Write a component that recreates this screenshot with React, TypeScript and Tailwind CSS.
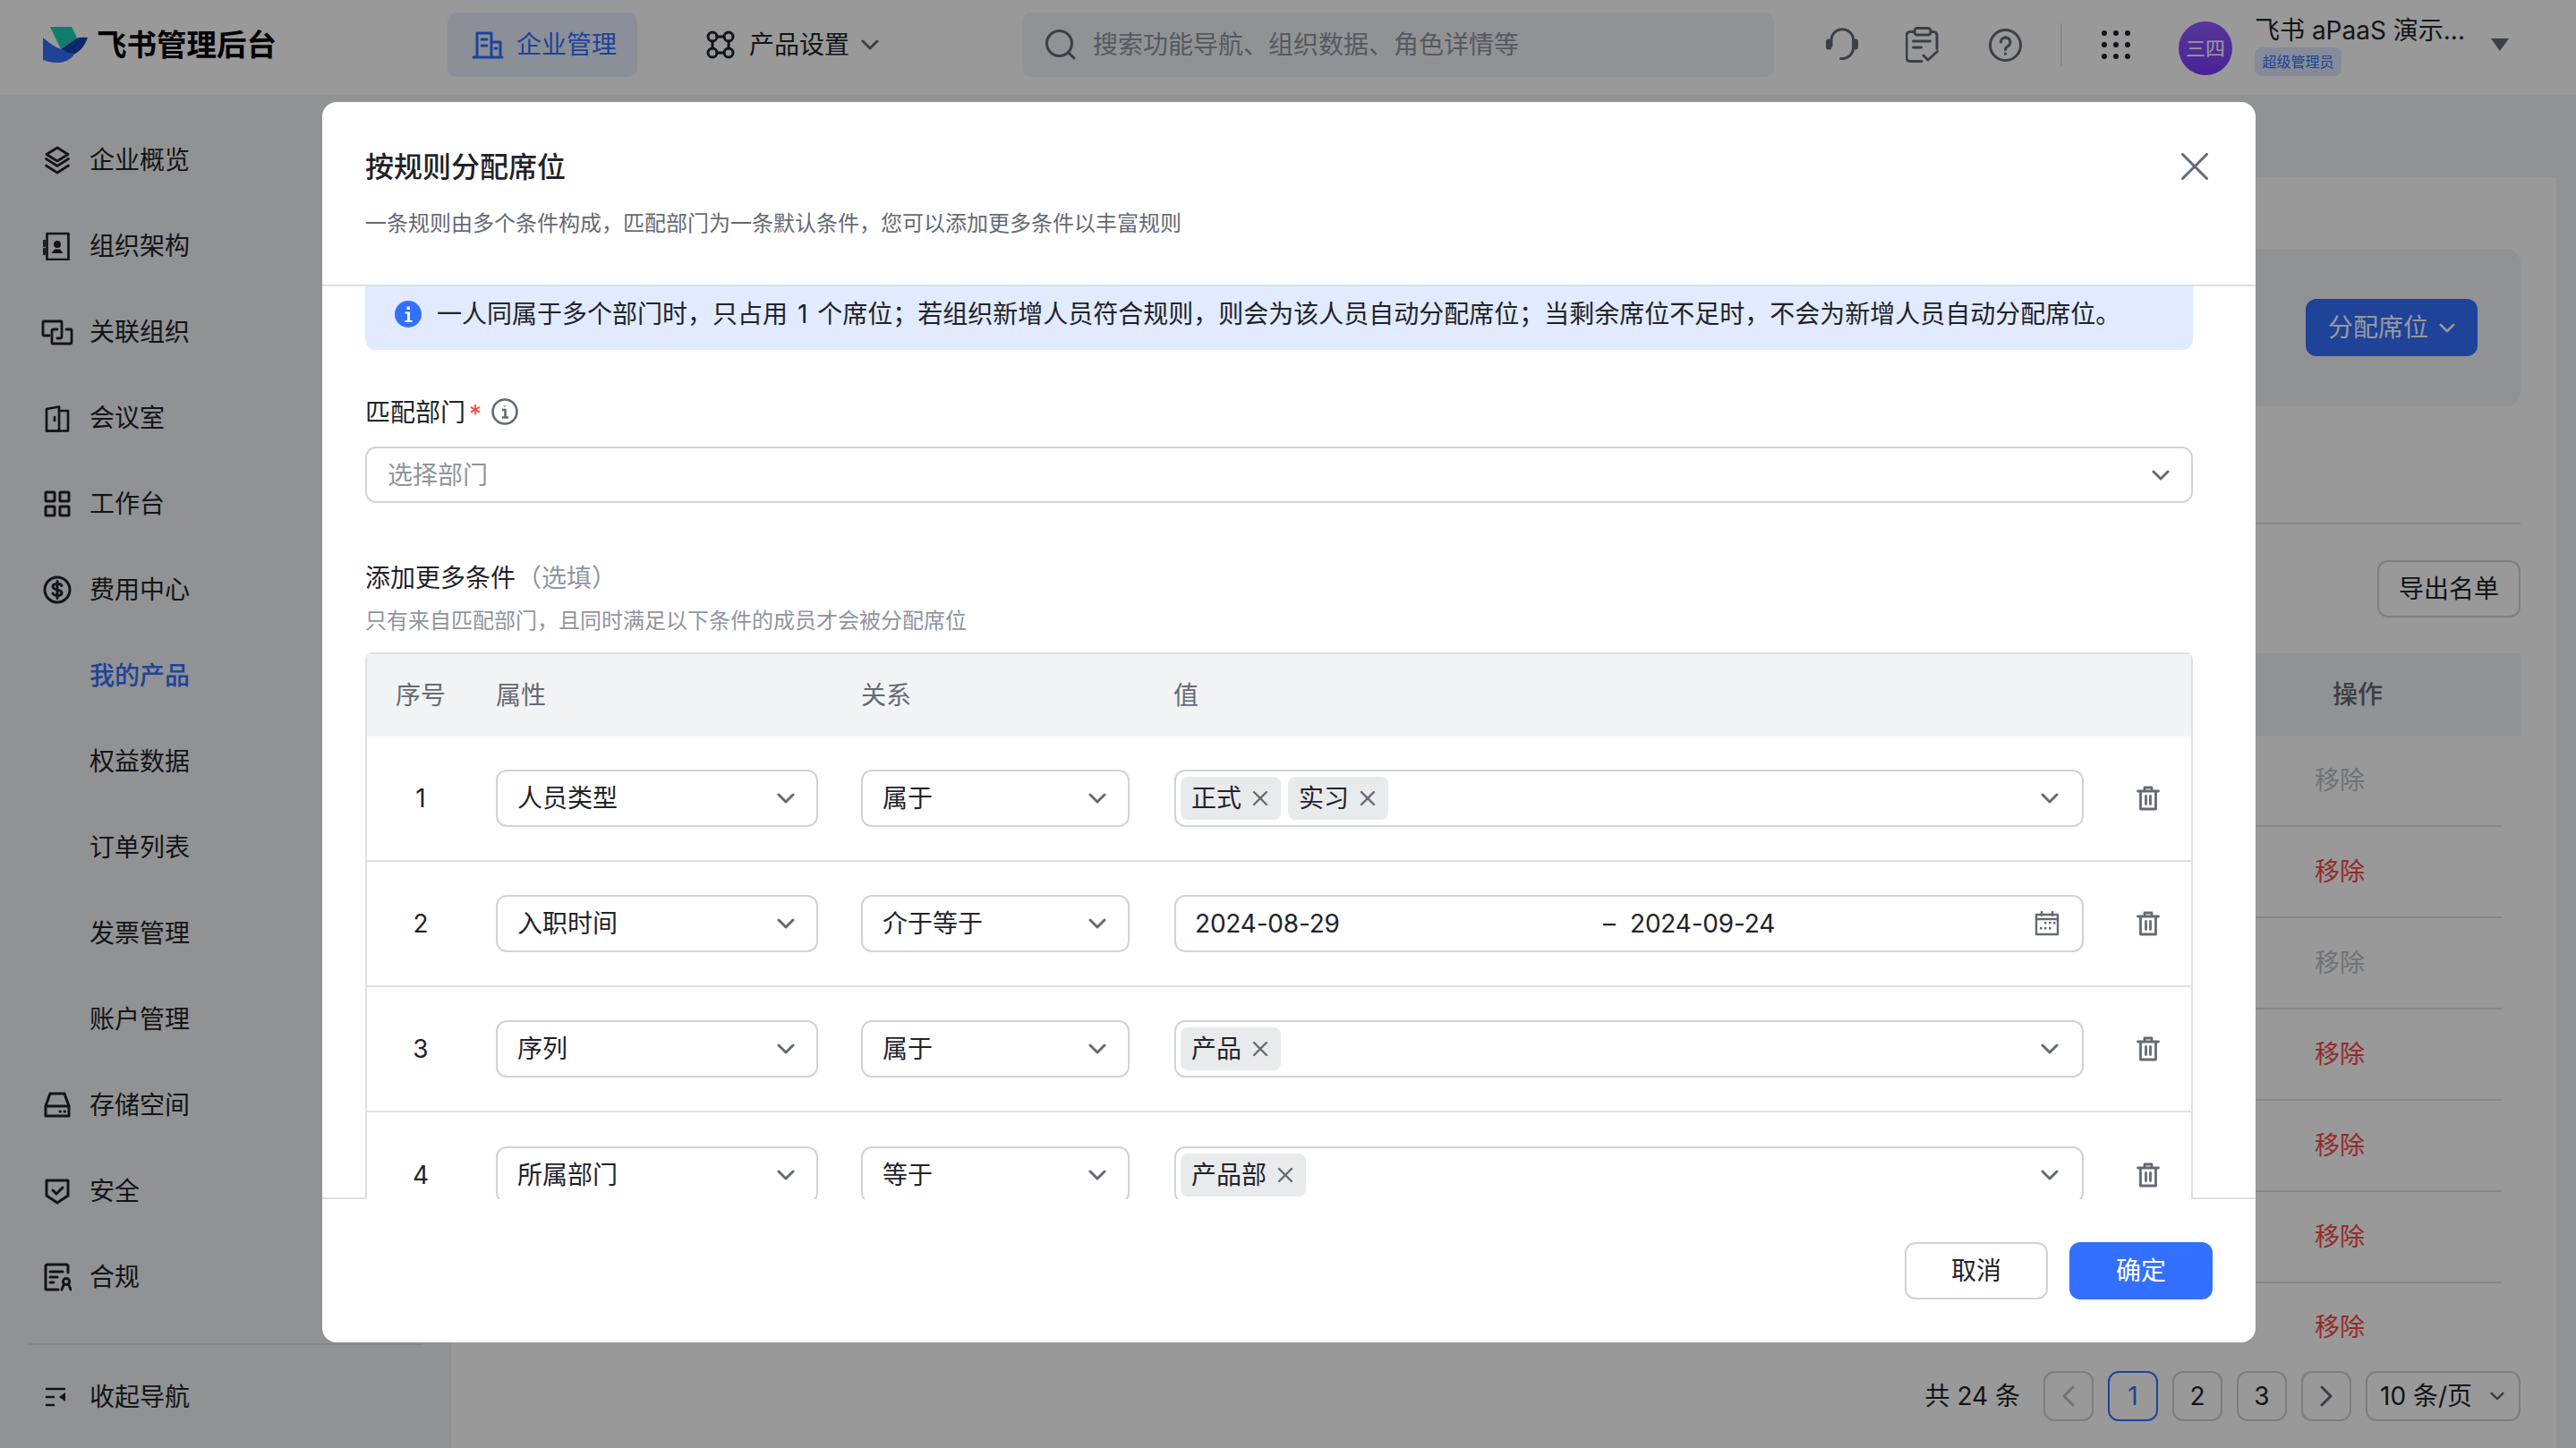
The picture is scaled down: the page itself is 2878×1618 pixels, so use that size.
import React from "react";

type IconProps = { className?: string };

const S = ({ w = 32, h = 32, vb = "0 0 32 32", sw = 3, children, className = "" }: { w?: number; h?: number; vb?: string; sw?: number; children: React.ReactNode; className?: string }) => (
  <svg width={w} height={h} viewBox={vb} fill="none" stroke="currentColor" strokeWidth={sw} strokeLinejoin="round" strokeLinecap="round" className={`shrink-0 ${className}`}>
    {children}
  </svg>
);

const LayersIcon = () => (
  <S sw={2.700}><path d="M16 2 28 9.500 16 17 4 9.500Z" /><path d="M3.500 14.500 16 22.500l12.500-8" /><path d="M3.500 22 16 30l12.500-8" /></S>
);
const ContactIcon = () => (
  <S sw={2.700}><path d="M4.500 2h24v29h-24Z" /><circle cx="16" cy="14" r="4" fill="currentColor" stroke="none" /><path d="M13 19.500h6l3.500 4.500h-13Z" fill="currentColor" stroke="none" /><path d="M1.500 10v6M1.500 19v6" /></S>
);
const LinkOrgIcon = () => (
  <S w={36} vb="-2 0 36 32" sw={2.800}><path d="M7 20H1a1 1 0 0 1-1-1V5a1 1 0 0 1 1-1h19a1 1 0 0 1 1 1v16a2 2 0 0 1-2 2h-3" /><path d="M16 13h-4a2 2 0 0 0-2 2v13a1 1 0 0 0 1 1h20a1 1 0 0 0 1-1V14a1 1 0 0 0-1-1h-5" /></S>
);
const DoorIcon = () => (
  <S sw={2.700}><path d="M4 30.500V6l14-2.500v27Z" /><path d="M18 8h10v22.500H4" /><path d="M13 15v4" /></S>
);
const GridIcon = () => (
  <S><rect x="3" y="3" width="10" height="10" rx="1" /><rect x="19" y="3" width="10" height="10" rx="1" /><rect x="3" y="19" width="10" height="10" rx="1" /><rect x="19" y="19" width="10" height="10" rx="1" /></S>
);
const DollarIcon = () => (
  <S><circle cx="16" cy="16" r="14" /><path d="M21 11.500C19.500 8.500 11 8.500 11 12.500c0 4.500 10 2.500 10 7 0 4-8.500 4-10 .5" /><path d="M16 6.500v19" /></S>
);
const DriveIcon = () => (
  <S><path d="M8 3h16l5 14v11H3V17Z" /><path d="M3 17h26" /><path d="M19 23h.5M24 23h.5" /></S>
);
const ShieldIcon = () => (
  <S><path d="M4 4h24v17l-12 8-12-8Z" /><path d="m11 15 4 4 7-7" /></S>
);
const ComplianceIcon = () => (
  <S><path d="M28 11V4a2 2 0 0 0-2-2H5a2 2 0 0 0-2 2v25a1 1 0 0 0 1 1h13" /><path d="M8 10h14M8 16h8M8 22h4" /><circle cx="26" cy="21" r="3.500" /><path d="m23 25-2 5M29 25l2 5" /></S>
);
const CollapseIcon = () => (
  <S sw={2.600}><path d="M4 7h20M4 16h8M4 25h8" /><path d="M25 11v10l-7-5Z" fill="currentColor" stroke="none" /></S>
);
const BuildingIcon = () => (
  <S w={36} h={32} vb="0 0 36 32"><path d="M6 29V3h16v26" /><path d="M22 13h10v16" /><path d="M2 30h32" /><path d="M11 10h6M11 17h6M26 20h2" /></S>
);
const ProductIcon = () => (
  <S w={34} h={34} vb="0 0 34 34"><circle cx="8" cy="8" r="5" /><circle cx="26" cy="8" r="5" /><circle cx="8" cy="26" r="5" /><circle cx="26" cy="26" r="5" /><path d="M13 8h8M13 26h8M8 13v8M26 13v8" /></S>
);
const SearchIcon = () => (
  <S w={36} h={36} vb="0 0 36 36"><circle cx="16.500" cy="16.500" r="14" /><path d="m27 27 6 6" /></S>
);
const HeadsetIcon = () => (
  <S w={36} h={38} vb="0 0 36 38"><path d="M6 20v-6a12.300 12.300 0 0 1 24.600 0v6" /><rect x="0" y="12.500" width="6.500" height="12" rx="3" fill="currentColor" stroke="none" /><rect x="29.500" y="12.500" width="6.500" height="12" rx="3" fill="currentColor" stroke="none" /><path d="M30.600 22c0 6-4 11-11 12.500h-3" /></S>
);
const DocCheckIcon = () => (
  <S w={38} h={40} vb="0 0 38 40"><path d="M10 5.500H5a4 4 0 0 0-4 4v25a4 4 0 0 0 4 4h13" /><path d="M28 5.500h3a4 4 0 0 1 4 4v15" /><rect x="10" y="1.500" width="18" height="7.500" rx="3" /><path d="M8.500 16h19M8.500 23h9" /><path d="m20 32 5 5 10.500-9.500" /></S>
);
const HelpIcon = () => (
  <S w={37} h={37} vb="0 0 37 37"><circle cx="18.500" cy="18.500" r="17" /><path d="M13.500 15a5.200 5.200 0 1 1 8 4.500c-1.800 1.200-3 2-3 4" /><path d="M18.500 28v.2" /></S>
);
const Chevron = ({ w = 20, className = "" }: IconProps & { w?: number }) => (
  <svg width={w} height={Math.round(w * 0.6)} viewBox="0 0 20 12" fill="none" stroke="currentColor" strokeWidth={3} strokeLinecap="round" strokeLinejoin="round" className={`shrink-0 ${className}`}>
    <path d="M2 2l8 8 8-8" />
  </svg>
);
const TagX = () => (
  <svg width="18" height="18" viewBox="0 0 18 18" fill="none" stroke="currentColor" strokeWidth={2.400} strokeLinecap="round" className="shrink-0 text-[#646a73]">
    <path d="M2 2l14 14M16 2 2 16" />
  </svg>
);
const TrashIcon = () => (
  <svg width="26" height="28" viewBox="0 0 26 28" fill="none" stroke="currentColor" strokeWidth={2.800} strokeLinejoin="round" strokeLinecap="round" className="shrink-0 text-[#646a73]">
    <path d="M1.500 6h23M9 6V2h8v4M4.500 6v20h17V6M10.500 11.500v9M15.500 11.500v9" />
  </svg>
);
const CalendarIcon = () => (
  <svg width="28" height="28" viewBox="0 0 28 28" fill="none" stroke="currentColor" strokeWidth={2.400} strokeLinejoin="round" strokeLinecap="round" className="shrink-0 text-[#646a73]">
    <path d="M2 4h24v22H2ZM8 1v4M20 1v4" />
    <path d="M2 9h24" />
    <g fill="currentColor" stroke="none"><rect x="11" y="12" width="2.500" height="2.500" /><rect x="16" y="12" width="2.500" height="2.500" /><rect x="21" y="12" width="2.500" height="2.500" /><rect x="6" y="18" width="2.500" height="2.500" /><rect x="11" y="18" width="2.500" height="2.500" /><rect x="16" y="18" width="2.500" height="2.500" /></g>
  </svg>
);

const Logo = () => (
  <svg width="50" height="40" viewBox="48 30 50 40" className="shrink-0">
    <path d="M56 30h24l6 12-18 13Z" fill="#1ad1b3" />
    <path d="M48 42c6 5 12 10 20 13 6 2.500 11 4 16 4-4 7-11 11-19 11-6 0-12-1-17-3Z" fill="#3370ff" />
    <path d="M68 55l17-12c4-1.500 9-1.500 13-1-2 5-5 13-14 18-6 0-11-2.500-16-5Z" fill="#1246b2" />
  </svg>
);

const navItems: { label: string; icon?: React.ReactNode; active?: boolean }[] = [
  { label: "企业概览", icon: <LayersIcon /> },
  { label: "组织架构", icon: <ContactIcon /> },
  { label: "关联组织", icon: <LinkOrgIcon /> },
  { label: "会议室", icon: <DoorIcon /> },
  { label: "工作台", icon: <GridIcon /> },
  { label: "费用中心", icon: <DollarIcon /> },
  { label: "我的产品", active: true },
  { label: "权益数据" },
  { label: "订单列表" },
  { label: "发票管理" },
  { label: "账户管理" },
  { label: "存储空间", icon: <DriveIcon /> },
  { label: "安全", icon: <ShieldIcon /> },
  { label: "合规", icon: <ComplianceIcon /> },
];

const Sidebar = () => (
  <aside className="w-[504px] shrink-0 bg-[#f2f3f5] flex flex-col">
    <nav className="flex flex-col gap-[16px] pt-[33px] pl-[48px]">
      {navItems.map((n) => (
        <div key={n.label} className={`flex items-center h-[80px] text-[28px] ${n.active ? "text-[#3370ff] font-medium" : "text-[#1f2329]"}`}>
          <span className="w-[32px] mr-[20px] flex justify-center">{n.icon}</span>
          {n.label}
        </div>
      ))}
    </nav>
    <div className="mt-auto mx-[32px] h-[117px] border-t-2 border-[#dee0e3] flex items-center pl-[16px] text-[28px] text-[#1f2329]">
      <span className="w-[32px] mr-[20px] flex justify-center"><CollapseIcon /></span>
      收起导航
    </div>
  </aside>
);

const Header = () => (
  <header className="h-[106px] shrink-0 bg-white flex items-center pb-[6px] text-[28px] text-[#1f2329]">
    <div className="ml-[48px] flex items-center w-[452px]">
      <Logo />
      <span className="ml-[10px] text-[33.5px] font-bold text-[#000000]">飞书管理后台</span>
    </div>
    <div className="w-[212px] h-[72px] rounded-[10px] bg-[#e8eefe] text-[#3370ff] flex items-center pl-[27px] gap-[14px]">
      <BuildingIcon />
      <span>企业管理</span>
    </div>
    <div className="ml-[76px] flex items-center">
      <ProductIcon />
      <span className="ml-[15px]">产品设置</span>
      <Chevron w={20} className="ml-[13px] text-[#646a73]" />
    </div>
    <div className="ml-[160px] w-[840px] h-[72px] rounded-[10px] bg-[#f2f3f5] flex items-center pl-[25px] gap-[18px] text-[#8f959e]">
      <span className="text-[#646a73] flex"><SearchIcon /></span>
      <span>搜索功能导航、组织数据、角色详情等</span>
    </div>
    <div className="ml-[58px] flex items-center text-[#646a73]">
      <HeadsetIcon />
      <span className="ml-[53px] flex"><DocCheckIcon /></span>
      <span className="ml-[55px] flex"><HelpIcon /></span>
    </div>
    <div className="ml-[43px] w-[2px] h-[48px] bg-[#e4e6e9]" />
    <div className="ml-[44px] grid grid-cols-3 gap-x-[7px] gap-y-[7px]">
      {Array.from({ length: 9 }).map((_, i) => (
        <span key={i} className="w-[6px] h-[6px] rounded-full bg-[#1f2329]" />
      ))}
    </div>
    <div className="ml-[54px] mt-[8px] w-[60px] h-[60px] rounded-full bg-linear-to-b from-[#905bff] to-[#7d37ff] text-white text-[22px] flex items-center justify-center">
      三四
    </div>
    <div className="ml-[25px] w-[264px] flex flex-col">
      <span className="leading-[36px] h-[36px]">飞书 aPaaS 演示...</span>
      <span className="mt-[1px] w-[97px] h-[32px] rounded-[8px] bg-[#dfe8ff] text-[#3370ff] text-[16px] leading-[32px] text-center whitespace-nowrap">超级管理员</span>
    </div>
    <svg width="20" height="14" viewBox="0 0 20 14" className="shrink-0 text-[#646a73]"><path d="M0 0h20L10 14Z" fill="currentColor" /></svg>
  </header>
);

const rows = [
  { t: "移除", dim: true },
  { t: "移除" },
  { t: "移除", dim: true },
  { t: "移除" },
  { t: "移除" },
  { t: "移除" },
  { t: "移除", last: true },
];

const PageBtn = ({ children, cur }: { children: React.ReactNode; cur?: boolean }) => (
  <div className={`w-[56px] h-[56px] rounded-[12px] border-2 flex items-center justify-center ${cur ? "border-[#3370ff] text-[#3370ff]" : "border-[#d0d3d6] text-[#1f2329]"}`}>
    {children}
  </div>
);

const Main = () => (
  <main className="flex-1 bg-[#f2f3f5] pt-[92px] pr-[22px] flex">
    <section className="flex-1 bg-white pt-[80px] pl-[40px] pr-[40px] flex flex-col">
      <div className="h-[176px] rounded-[16px] bg-[#f2f3f5] flex items-center justify-end pr-[48px]">
        <div className="w-[192px] h-[64px] rounded-[12px] bg-[#3370ff] text-white text-[28px] flex items-center justify-center gap-[12px]">
          分配席位<Chevron w={18} />
        </div>
      </div>
      <div className="mt-[130px] border-t-2 border-[#dee0e3]" />
      <div className="mt-[40px] flex justify-end">
        <div className="w-[160px] h-[64px] rounded-[12px] border-2 border-[#d0d3d6] text-[28px] text-[#1f2329] flex items-center justify-center">导出名单</div>
      </div>
      <div className="mt-[40px] h-[92px] bg-[#f2f3f5] flex items-center justify-end pr-[154px] text-[28px] font-medium text-[#646a73]">操作</div>
      <div className="flex flex-col mr-[21px]">
        {rows.map((r, i) => (
          <div key={i} className={`flex items-center justify-end pr-[153px] text-[28px] ${r.last ? "h-[98px]" : "h-[102px] border-b-2 border-[#dee0e3]"} ${r.dim ? "text-[#bbbfc4]" : "text-[#f54a45]"}`}>
            {r.t}
          </div>
        ))}
      </div>
      <div className="h-[56px] flex items-center justify-end gap-[16px] text-[28px] text-[#1f2329]">
        <span className="mr-[10px]">共 24 条</span>
        <PageBtn><svg width="14" height="24" viewBox="0 0 14 24" fill="none" stroke="#bbbfc4" strokeWidth={3} strokeLinecap="round" strokeLinejoin="round"><path d="M12 2 2 12l10 10" /></svg></PageBtn>
        <PageBtn cur>1</PageBtn>
        <PageBtn>2</PageBtn>
        <PageBtn>3</PageBtn>
        <PageBtn><svg width="14" height="24" viewBox="0 0 14 24" fill="none" stroke="#646a73" strokeWidth={3} strokeLinecap="round" strokeLinejoin="round"><path d="m2 2 10 10L2 22" /></svg></PageBtn>
        <div className="w-[173px] h-[56px] rounded-[12px] border-2 border-[#d0d3d6] flex items-center pl-[14px] gap-[20px] whitespace-nowrap">
          10 条/页<Chevron w={16} className="text-[#646a73]" />
        </div>
      </div>
    </section>
  </main>
);

const Select = ({ label, w }: { label: string; w: string }) => (
  <div className={`${w} h-[64px] shrink-0 rounded-[12px] border-2 border-[#d0d3d6] flex items-center justify-between pl-[22px] pr-[24px] text-[28px] text-[#1f2329]`}>
    <span>{label}</span>
    <Chevron w={20} className="text-[#646a73]" />
  </div>
);

const Tag = ({ t }: { t: string }) => (
  <span className="h-[48px] rounded-[8px] bg-[#e9eaeb] flex items-center pl-[12px] pr-[14px] gap-[12px]">
    {t}
    <TagX />
  </span>
);

const TagBox = ({ tags }: { tags: string[] }) => (
  <div className="w-[1016px] h-[64px] shrink-0 rounded-[12px] border-2 border-[#d0d3d6] flex items-center pl-[5px] pr-[26px] gap-[8px] text-[28px] text-[#1f2329]">
    {tags.map((t) => <Tag key={t} t={t} />)}
    <Chevron w={20} className="ml-auto text-[#646a73]" />
  </div>
);

const DateBox = () => (
  <div className="w-[1016px] h-[64px] shrink-0 rounded-[12px] border-2 border-[#d0d3d6] flex items-center pl-[21px] pr-[25px] text-[28px] text-[#1f2329] tracking-[-0.2px]">
    <span className="w-[456px]">2024-08-29</span>
    <span className="w-[30px]">–</span>
    <span>2024-09-24</span>
    <span className="ml-auto flex"><CalendarIcon /></span>
  </div>
);

const Row = ({ n, attr, rel, children, last }: { n: number; attr: string; rel: string; children: React.ReactNode; last?: boolean }) => (
  <div className={`h-[140px] flex items-center shrink-0 ${last ? "" : "border-b-2 border-[#dee0e3]"}`}>
    <div className="w-[144px] pl-[32px] shrink-0 text-[28px] text-[#1f2329]"><span className="block w-[56px] text-center">{n}</span></div>
    <Select label={attr} w="w-[360px]" />
    <span className="w-[48px] shrink-0" />
    <Select label={rel} w="w-[300px]" />
    <span className="w-[50px] shrink-0" />
    {children}
    <span className="ml-[59px] flex"><TrashIcon /></span>
  </div>
);

const Dialog = () => (
  <div className="relative w-[2160px] h-[1386px] rounded-[16px] bg-white flex flex-col overflow-hidden text-[#1f2329]">
    <div className="h-[206px] shrink-0 border-b-2 border-[#dee0e3] pt-[51px] pl-[48px]">
      <h2 className="text-[32px] leading-[44px] font-medium">按规则分配席位</h2>
      <p className="mt-[23px] text-[24px] leading-[36px] text-[#646a73]">一条规则由多个条件构成，匹配部门为一条默认条件，您可以添加更多条件以丰富规则</p>
    </div>
    <button className="absolute top-[57px] right-[53px] text-[#646a73]">
      <svg width="30" height="30" viewBox="0 0 30 30" fill="none" stroke="currentColor" strokeWidth={3} strokeLinecap="round" className="block"><path d="M1.500 1.500l27 27M28.500 1.500l-27 27" /></svg>
    </button>
    <div className="flex flex-col shrink-0">
      <div className="ml-[48px] mr-[70px] h-[71px] pb-[9px] bg-[#e1eaff] rounded-b-[12px] flex items-center pl-[33px] gap-[17px] text-[28px] text-[#1f2329] [word-spacing:3px]">
        <svg width="30" height="30" viewBox="0 0 30 30" className="shrink-0">
          <circle cx="15" cy="15" r="15" fill="#3370ff" />
          <rect x="13.500" y="6.500" width="3.500" height="3.500" rx="1" fill="#fff" />
          <path d="M11.500 12.500h5.500v9.500h2.500v2h-8v-2h2.500v-7.500h-2.500Z" fill="#fff" />
        </svg>
        <span>一人同属于多个部门时，只占用 1 个席位；若组织新增人员符合规则，则会为该人员自动分配席位；当剩余席位不足时，不会为新增人员自动分配席位。</span>
      </div>
      <div className="ml-[48px] mt-[50px] h-[40px] flex items-center text-[28px]">
        匹配部门<span className="ml-[4px] mt-[4px] text-[#f54a45]">*</span>
        <svg width="30" height="30" viewBox="0 0 30 30" fill="none" stroke="#646a73" strokeWidth={2.600} className="ml-[11px] shrink-0 mt-[-2px]">
          <circle cx="15" cy="15" r="13.500" />
          <path d="M12 13h3.500v8M12 21.500h7" />
          <path d="M15 8.500v1" />
        </svg>
      </div>
      <div className="ml-[48px] mr-[70px] mt-[18px] h-[63px] rounded-[12px] border-2 border-[#d0d3d6] flex items-center justify-between pl-[23px] pr-[24px] text-[28px] text-[#8f959e]">
        <span>选择部门</span>
        <Chevron w={20} className="text-[#646a73]" />
      </div>
      <div className="ml-[48px] mt-[64px] h-[40px] flex items-center text-[28px]">
        添加更多条件<span className="ml-[1px] text-[#8f959e]">（选填）</span>
      </div>
      <p className="ml-[48px] mt-[10px] text-[24px] leading-[36px] text-[#8f959e]">只有来自匹配部门，且同时满足以下条件的成员才会被分配席位</p>
      <div className="mt-[17px] flex h-[611px]">
        <div className="w-[48px] shrink-0 border-b-2 border-[#dee0e3]" />
        <div className="w-[2042px] shrink-0 overflow-hidden">
          <div className="border-2 border-b-0 border-[#dee0e3] rounded-t-[8px] h-[800px]">
            <div className="h-[92px] bg-[#f2f3f5] flex items-center text-[28px] text-[#646a73]">
              <span className="w-[144px] pl-[32px] shrink-0">序号</span>
              <span className="w-[408px] shrink-0">属性</span>
              <span className="w-[349px] shrink-0">关系</span>
              <span>值</span>
            </div>
            <Row n={1} attr="人员类型" rel="属于"><TagBox tags={["正式", "实习"]} /></Row>
            <Row n={2} attr="入职时间" rel="介于等于"><DateBox /></Row>
            <Row n={3} attr="序列" rel="属于"><TagBox tags={["产品"]} /></Row>
            <Row n={4} attr="所属部门" rel="等于" last><TagBox tags={["产品部"]} /></Row>
          </div>
        </div>
        <div className="flex-1 border-b-2 border-[#dee0e3]" />
      </div>
    </div>
    <div className="flex-1 flex justify-end gap-[24px] pt-[48px] pr-[48px] text-[28px]">
      <button className="w-[160px] h-[64px] rounded-[12px] border-2 border-[#d0d3d6] bg-white">取消</button>
      <button className="w-[160px] h-[64px] rounded-[12px] bg-[#3370ff] text-white">确定</button>
    </div>
  </div>
);

export default function App() {
  return (
    <div className="relative w-[2878px] h-[1618px] overflow-hidden flex flex-col bg-white font-['Inter','Noto_Sans_CJK_SC',sans-serif]">
      <Header />
      <div className="flex-1 flex min-h-0">
        <Sidebar />
        <Main />
      </div>
      <div className="absolute inset-0 bg-black/40 pt-[114px] pl-[360px]">
        <Dialog />
      </div>
    </div>
  );
}
